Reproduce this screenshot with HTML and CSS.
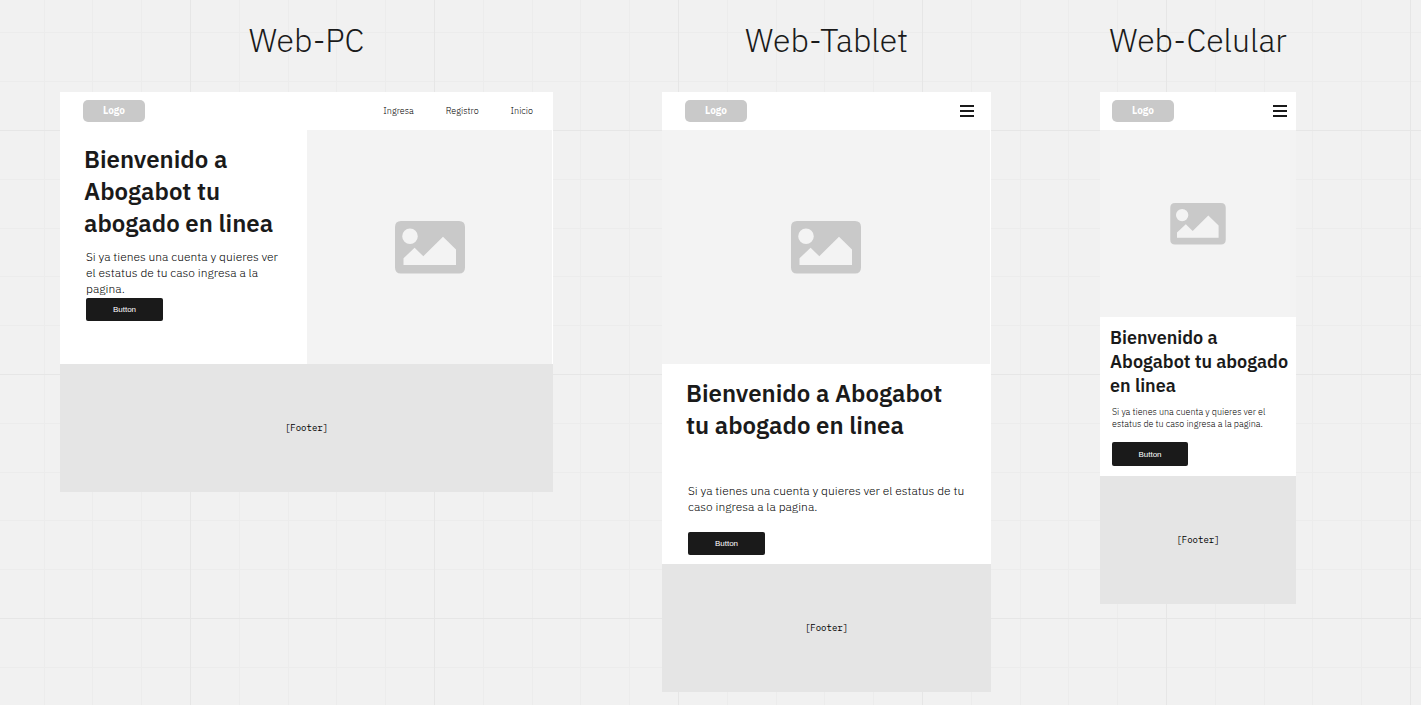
FILE: index.html
```html
<!DOCTYPE html>
<html lang="es">
<head>
<meta charset="utf-8">
<meta name="viewport" content="width=device-width, initial-scale=1">
<title>Abogabot wireframes</title>
<link rel="stylesheet" href="styles.css">
</head>
<body>
<svg class="symbols" aria-hidden="true">
  <symbol id="picture" viewBox="0 0 70 53">
    <path fill="#c9c9c9" fill-rule="evenodd" d="M6 0H64Q70 0 70 6V46.5Q70 52.5 64 52.5H6Q0 52.5 0 46.5V6Q0 0 6 0ZM15 7.5A7.8 7.8 0 1 0 15 23.1A7.8 7.8 0 1 0 15 7.5ZM8.5 37.3V44H61V28.5L48 15.7L28.3 35.2L19.6 26.7Z"/>
  </symbol>
  <symbol id="menu" viewBox="0 0 14 12">
    <path fill="#1a1a1a" d="M0 0H14V2H0ZM0 5H14V7H0ZM0 10H14V12H0Z"/>
  </symbol>
</svg>
<main class="board">
  <section class="device device-pc">
    <h2 class="device-name">Web-PC</h2>
    <div class="frame">
      <header class="topbar">
        <span class="logo">Logo</span>
        <nav class="links">
          <a href="#">Ingresa</a>
          <a href="#">Registro</a>
          <a href="#">Inicio</a>
        </nav>
      </header>
      <div class="hero">
        <div class="copy">
          <h1 class="headline">Bienvenido a Abogabot tu abogado en linea</h1>
          <p class="lead">Si ya tienes una cuenta y quieres ver el estatus de tu caso ingresa a la pagina.</p>
          <button class="action" type="button">Button</button>
        </div>
        <div class="image"><svg class="picture" aria-hidden="true"><use href="#picture"/></svg></div>
      </div>
      <footer class="footer">[Footer]</footer>
    </div>
  </section>

  <section class="device device-tablet">
    <h2 class="device-name">Web-Tablet</h2>
    <div class="frame">
      <header class="topbar">
        <span class="logo">Logo</span>
        <button class="menu" type="button" aria-label="Menu"><svg class="menu-icon" aria-hidden="true"><use href="#menu"/></svg></button>
      </header>
      <div class="image"><svg class="picture" aria-hidden="true"><use href="#picture"/></svg></div>
      <div class="copy">
        <h1 class="headline">Bienvenido a Abogabot tu abogado en linea</h1>
        <p class="lead">Si ya tienes una cuenta y quieres ver el estatus de tu caso ingresa a la pagina.</p>
        <button class="action" type="button">Button</button>
      </div>
      <footer class="footer">[Footer]</footer>
    </div>
  </section>

  <section class="device device-phone">
    <h2 class="device-name">Web-Celular</h2>
    <div class="frame">
      <header class="topbar">
        <span class="logo">Logo</span>
        <button class="menu" type="button" aria-label="Menu"><svg class="menu-icon" aria-hidden="true"><use href="#menu"/></svg></button>
      </header>
      <div class="image"><svg class="picture" aria-hidden="true"><use href="#picture"/></svg></div>
      <div class="copy">
        <h1 class="headline">Bienvenido a Abogabot tu abogado en linea</h1>
        <p class="lead">Si ya tienes una cuenta y quieres ver el estatus de tu caso ingresa a la pagina.</p>
        <button class="action" type="button">Button</button>
      </div>
      <footer class="footer">[Footer]</footer>
    </div>
  </section>
</main>
</body>
</html>
```
FILE: styles.css
```css
* {
  box-sizing: border-box;
}

body {
  margin: 0;
  min-height: 100vh;
  color: #1a1a1a;
  font-family: "IBM Plex Sans", "Open Sans", sans-serif;
  background-color: #f1f1f1;
  /* strong lines every 244px, four faint ones between them */
  background-image:
    linear-gradient(90deg, #e6e6e6 1px, transparent 1px),
    linear-gradient(#e6e6e6 1px, transparent 1px),
    linear-gradient(90deg, transparent 49px, #ececec 49px 50px, transparent 50px 98px, #ececec 98px 99px, transparent 99px 146px, #ececec 146px 147px, transparent 147px 195px, #ececec 195px 196px, transparent 196px),
    linear-gradient(transparent 49px, #ececec 49px 50px, transparent 50px 98px, #ececec 98px 99px, transparent 99px 146px, #ececec 146px 147px, transparent 147px 195px, #ececec 195px 196px, transparent 196px);
  background-size: 244px 244px;
  background-position: 190px 130px;
}

.symbols {
  display: none;
}

.board {
  display: grid;
  grid-template-columns: 493fr 329fr 196fr;
  align-items: start;
  gap: 109px;
  padding: 20px 125px 13px 60px;
}

.device-name {
  margin: 0 0 32px;
  font-size: 32px;
  font-weight: 300;
  line-height: 40px;
  text-align: center;
  white-space: nowrap;
}

.frame {
  background: #fff;
}

.topbar {
  display: flex;
  align-items: center;
  justify-content: space-between;
  height: 38px;
  padding: 0 20px 0 23px;
}

.logo {
  width: 62px;
  border-radius: 5px;
  background: #c9c9c9;
  color: #fff;
  font-size: 10px;
  font-weight: 700;
  line-height: 22px;
  text-align: center;
}

.links {
  display: flex;
  gap: 32px;
}

.links a {
  color: #000;
  font-size: 9px;
  font-weight: 300;
  line-height: 12px;
  text-decoration: none;
}

.menu {
  display: flex;
  padding: 0;
  border: 0;
  background: none;
}

.menu-icon {
  width: 14px;
  height: 12px;
}

.hero {
  display: grid;
  grid-template-columns: 247fr 246fr;
}

.image {
  display: flex;
  align-items: center;
  justify-content: center;
  min-height: 234px;
  margin-right: 1px;
  background: #f3f3f3;
}

.picture {
  width: 70px;
  height: 53px;
}

.copy {
  display: flex;
  flex-direction: column;
  align-items: flex-start;
  padding: 13px 24px 9px;
}

.headline {
  margin: 0;
  font-size: 24px;
  font-weight: 600;
  line-height: 32px;
}

.lead {
  margin: 10px 0 1px;
  padding-left: 2px;
  color: #000;
  font-size: 12px;
  font-weight: 300;
  line-height: 16px;
}

.action {
  width: 77px;
  height: 23px;
  margin-left: 2px;
  padding: 0;
  border: 0;
  border-radius: 2px;
  background: #1a1a1a;
  color: #fff;
  font-family: "Liberation Sans", Arial, sans-serif;
  font-size: 8px;
}

.footer {
  display: flex;
  align-items: center;
  justify-content: center;
  height: 128px;
  padding-bottom: 2px;
  background: #e5e5e5;
  color: #000;
  font-family: "IBM Plex Mono", "Liberation Mono", monospace;
  font-size: 9px;
}

.device-tablet .topbar {
  padding-right: 17px;
}

.device-tablet .lead {
  margin: 42px 0 17px;
}

.device-phone .topbar {
  padding: 0 9px 0 12px;
}

.device-phone .image {
  min-height: 187px;
  margin-right: 0;
}

.device-phone .picture {
  width: 56px;
  height: 42px;
}

.device-phone .copy {
  padding: 9px 4px 10px 10px;
}

.device-phone .headline {
  font-size: 18px;
  line-height: 24px;
}

.device-phone .lead {
  margin: 8px 0 12px;
  font-size: 9px;
  line-height: 12px;
}

.device-phone .action {
  width: 76px;
  height: 24px;
}
```
